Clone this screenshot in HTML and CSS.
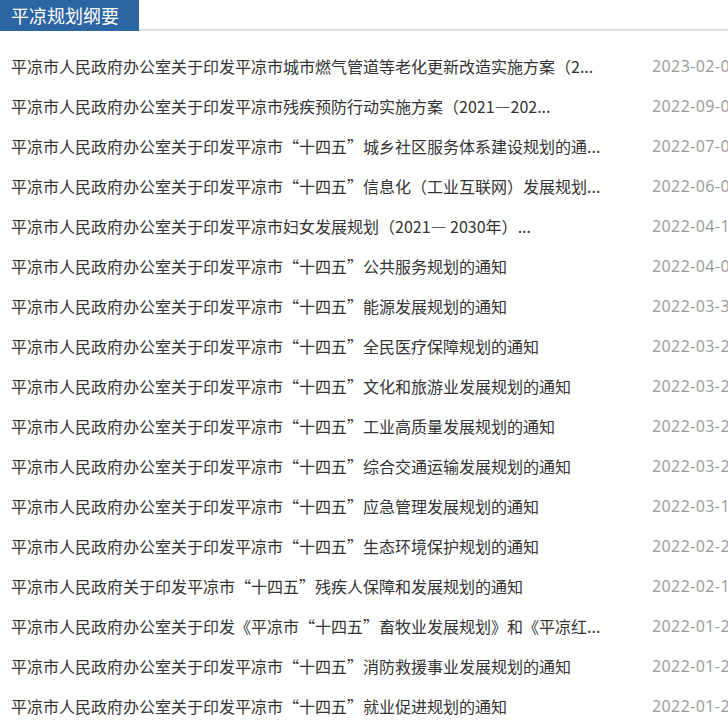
FILE: index.html
```html
<!DOCTYPE html>
<html lang="zh-CN">
<head>
<meta charset="utf-8">
<title>平凉规划纲要</title>
<link rel="stylesheet" href="styles.css">
</head>
<body>
<div class="panel">
  <div class="tabbar">
    <span class="tab">平凉规划纲要</span>
  </div>
  <ul class="list">
    <li class="item"><a class="title">平凉市人民政府办公室关于印发平凉市城市燃气管道等老化更新改造实施方案（2...</a><span class="date">2023-02-09</span></li>
    <li class="item"><a class="title">平凉市人民政府办公室关于印发平凉市残疾预防行动实施方案（2021—202...</a><span class="date">2022-09-06</span></li>
    <li class="item"><a class="title">平凉市人民政府办公室关于印发平凉市“十四五”城乡社区服务体系建设规划的通...</a><span class="date">2022-07-01</span></li>
    <li class="item"><a class="title">平凉市人民政府办公室关于印发平凉市“十四五”信息化（工业互联网）发展规划...</a><span class="date">2022-06-01</span></li>
    <li class="item"><a class="title">平凉市人民政府办公室关于印发平凉市妇女发展规划（2021— 2030年）...</a><span class="date">2022-04-15</span></li>
    <li class="item"><a class="title">平凉市人民政府办公室关于印发平凉市“十四五”公共服务规划的通知</a><span class="date">2022-04-02</span></li>
    <li class="item"><a class="title">平凉市人民政府办公室关于印发平凉市“十四五”能源发展规划的通知</a><span class="date">2022-03-31</span></li>
    <li class="item"><a class="title">平凉市人民政府办公室关于印发平凉市“十四五”全民医疗保障规划的通知</a><span class="date">2022-03-28</span></li>
    <li class="item"><a class="title">平凉市人民政府办公室关于印发平凉市“十四五”文化和旅游业发展规划的通知</a><span class="date">2022-03-25</span></li>
    <li class="item"><a class="title">平凉市人民政府办公室关于印发平凉市“十四五”工业高质量发展规划的通知</a><span class="date">2022-03-24</span></li>
    <li class="item"><a class="title">平凉市人民政府办公室关于印发平凉市“十四五”综合交通运输发展规划的通知</a><span class="date">2022-03-22</span></li>
    <li class="item"><a class="title">平凉市人民政府办公室关于印发平凉市“十四五”应急管理发展规划的通知</a><span class="date">2022-03-15</span></li>
    <li class="item"><a class="title">平凉市人民政府办公室关于印发平凉市“十四五”生态环境保护规划的通知</a><span class="date">2022-02-28</span></li>
    <li class="item"><a class="title">平凉市人民政府关于印发平凉市“十四五”残疾人保障和发展规划的通知</a><span class="date">2022-02-17</span></li>
    <li class="item"><a class="title">平凉市人民政府办公室关于印发《平凉市“十四五”畜牧业发展规划》和《平凉红...</a><span class="date">2022-01-29</span></li>
    <li class="item"><a class="title">平凉市人民政府办公室关于印发平凉市“十四五”消防救援事业发展规划的通知</a><span class="date">2022-01-27</span></li>
    <li class="item"><a class="title">平凉市人民政府办公室关于印发平凉市“十四五”就业促进规划的通知</a><span class="date">2022-01-25</span></li>
  </ul>
</div>
</body>
</html>
```
FILE: styles.css
```css
html, body {
  margin: 0;
  padding: 0;
  background: #fff;
  overflow: hidden;
}
body {
  font-family: "Noto Sans CJK SC", "Noto Sans", sans-serif;
  color: #333;
}
.panel {
  width: 800px;
}
.tabbar {
  display: flex;
  height: 31px;
  border-bottom: 2px solid #ddd;
  box-sizing: border-box;
}
.tab {
  display: block;
  width: 139px;
  height: 31px;
  box-sizing: border-box;
  padding-left: 11px;
  background: #2c65a4;
  color: #fff;
  font-size: 18px;
  line-height: 30px;
}
.list {
  list-style: none;
  margin: 0;
  padding: 15px 0 0 0;
}
.item {
  display: flex;
  align-items: center;
  height: 40px;
  font-size: 16px;
}
.title {
  flex: 0 0 641px;
  box-sizing: border-box;
  padding-left: 11px;
  white-space: nowrap;
  overflow: hidden;
  color: #333;
  text-decoration: none;
}
.date {
  margin-left: 11px;
  font-family: "Open Sans", "Noto Sans", sans-serif;
  letter-spacing: 0.4px;
  color: #999;
  white-space: nowrap;
}
```
